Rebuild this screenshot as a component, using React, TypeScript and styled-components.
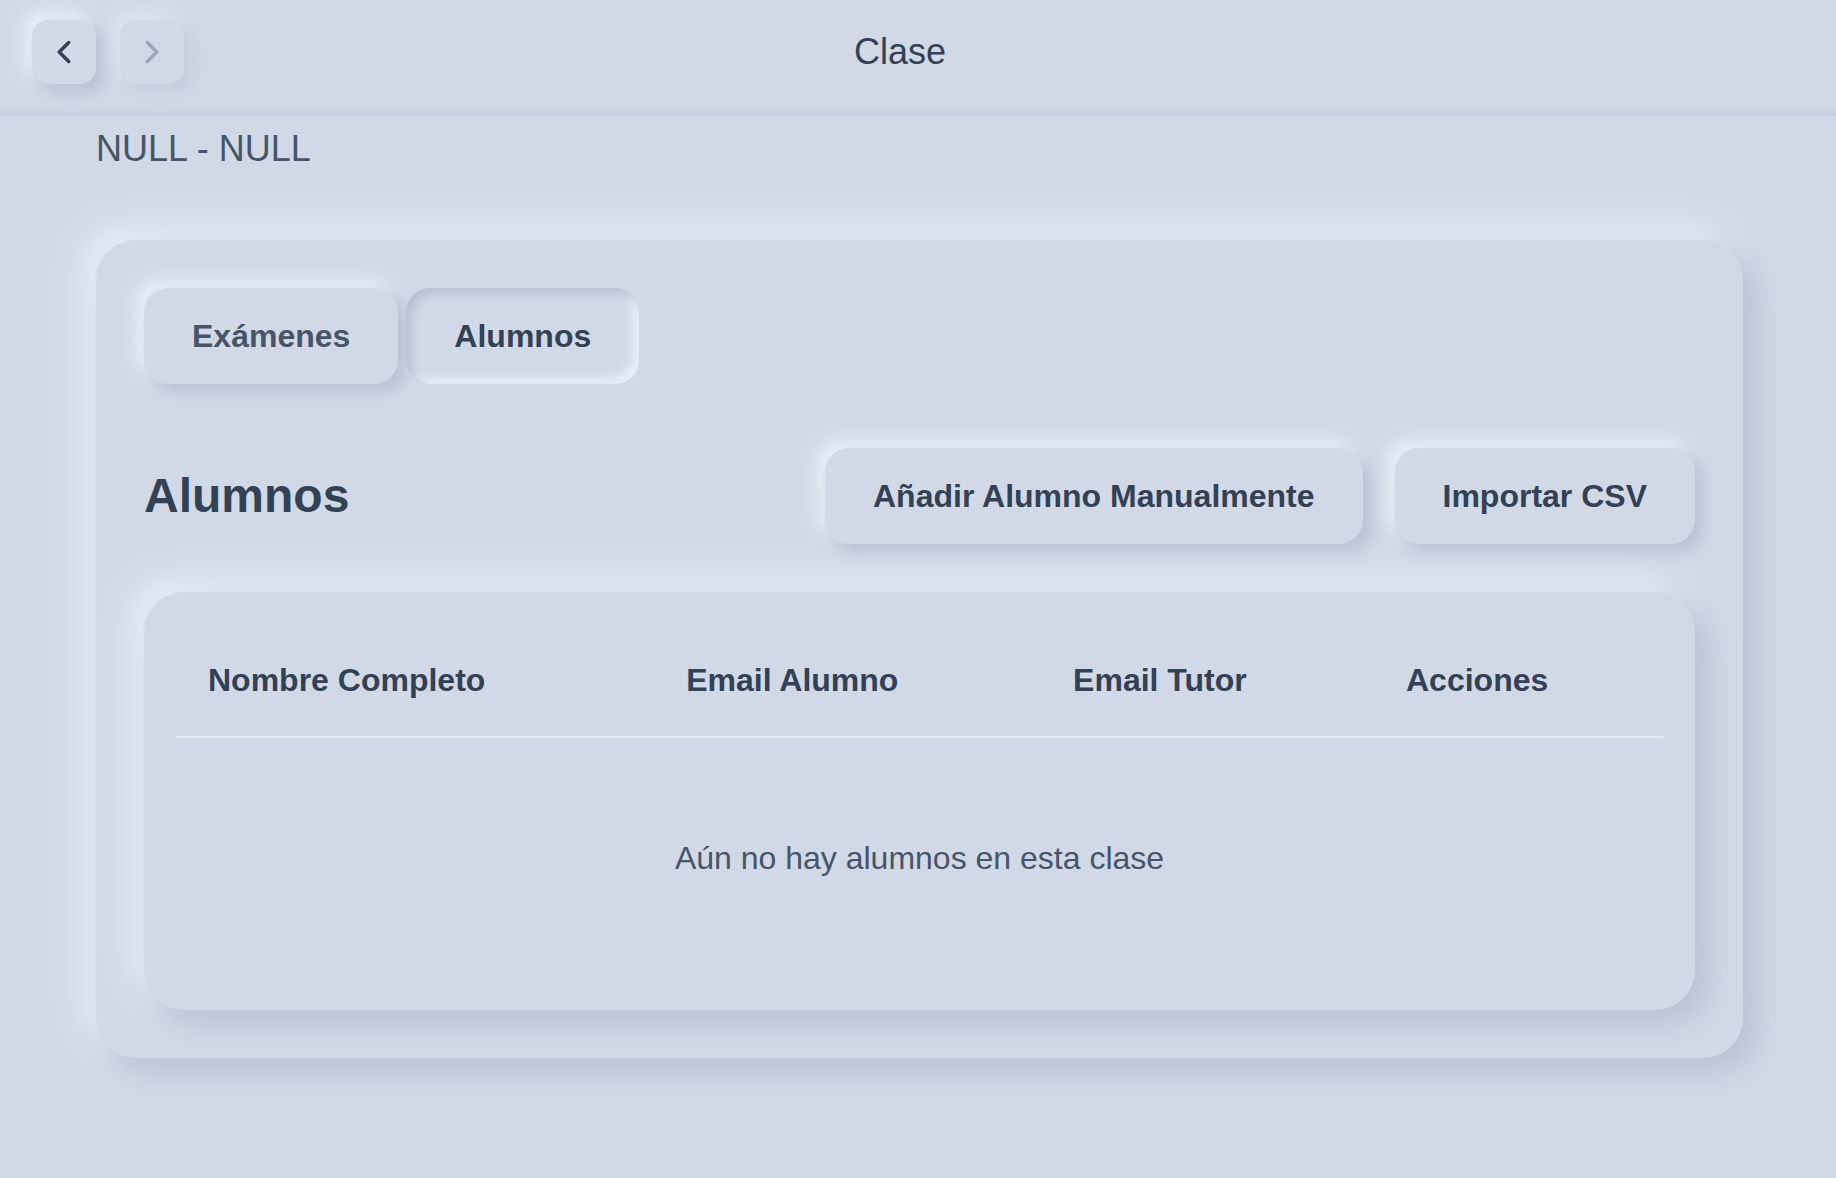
import styled, { createGlobalStyle } from 'styled-components'
import { ChevronLeft, ChevronRight } from 'lucide-react'

const GlobalStyle = createGlobalStyle`
  * {
    box-sizing: border-box;
  }
  html,
  body {
    margin: 0;
    padding: 0;
    background: #d1d9e6;
  }
  body {
    font-family: "Liberation Sans", Arial, sans-serif;
    color: #334155;
  }
`

const columns = ['Nombre Completo', 'Email Alumno', 'Email Tutor', 'Acciones']

export default function App() {
  return (
    <>
      <GlobalStyle />
      <Page>
        <TopBar>
          <NavGroup>
            <NavButton aria-label="Atrás">
              <ChevronLeft size={38} strokeWidth={2.2} />
            </NavButton>
            <NavButton aria-label="Adelante" disabled>
              <ChevronRight size={38} strokeWidth={2.2} />
            </NavButton>
          </NavGroup>
          <PageTitle>Clase</PageTitle>
          <span />
        </TopBar>

        <Content>
          <Subtitle>NULL - NULL</Subtitle>

          <Card>
            <Tabs>
              <Tab>Exámenes</Tab>
              <Tab $active>Alumnos</Tab>
            </Tabs>

            <SectionHeader>
              <SectionTitle>Alumnos</SectionTitle>
              <Actions>
                <ActionButton>Añadir Alumno Manualmente</ActionButton>
                <ActionButton>Importar CSV</ActionButton>
              </Actions>
            </SectionHeader>

            <TableCard>
              <Table>
                <thead>
                  <HeadRow>
                    {columns.map((c) => (
                      <Th key={c}>{c}</Th>
                    ))}
                  </HeadRow>
                </thead>
                <tbody>
                  <tr>
                    <EmptyCell colSpan={4}>Aún no hay alumnos en esta clase</EmptyCell>
                  </tr>
                </tbody>
              </Table>
            </TableCard>
          </Card>
        </Content>
      </Page>
    </>
  )
}

/**
 * style定義
 */
const raised = `
  box-shadow: 8px 8px 16px #b8c2d1, -8px -8px 16px #eaf0fa;
`
const raisedLarge = `
  box-shadow: 14px 14px 30px #b8c2d1, -14px -14px 30px #e6edf8;
`

const Page = styled.div`
  min-height: 100vh;
  background: #d1d9e6;
`

const TopBar = styled.header`
  display: grid;
  grid-template-columns: 1fr auto 1fr;
  align-items: center;
  height: 116px;
  padding: 20px 68px 32px 32px;
  box-shadow: inset 0 -8px 8px -6px rgba(170, 182, 200, 0.45);
`

const NavGroup = styled.div`
  display: flex;
  gap: 24px;
`

const NavButton = styled.button`
  display: flex;
  align-items: center;
  justify-content: center;
  width: 64px;
  height: 64px;
  padding: 0;
  border: none;
  border-radius: 16px;
  background: #d1d9e6;
  color: #334155;
  cursor: pointer;
  ${raised}

  &:disabled {
    opacity: 0.5;
    color: #64748b;
    cursor: default;
  }
`

const PageTitle = styled.h1`
  margin: 0;
  font-size: 36px;
  font-weight: 400;
  line-height: 40px;
  color: #334155;
`

const Content = styled.main`
  padding: 13px 93px 80px 96px;
`

const Subtitle = styled.h2`
  margin: 0 0 71px;
  font-size: 36px;
  font-weight: 400;
  line-height: 40px;
  color: #475569;
`

const Card = styled.section`
  padding: 48px;
  border-radius: 40px;
  background: #d1d9e6;
  ${raisedLarge}
`

const Tabs = styled.div`
  display: flex;
  gap: 8px;
  margin-bottom: 64px;
`

const Tab = styled.button<{ $active?: boolean }>`
  padding: 24px 48px;
  border: none;
  border-radius: 24px;
  background: #d1d9e6;
  font-family: inherit;
  font-size: 32px;
  font-weight: 700;
  line-height: 48px;
  color: ${({ $active }) => ($active ? '#334155' : '#475569')};
  cursor: pointer;
  box-shadow: ${({ $active }) =>
    $active
      ? 'inset 6px 6px 10px #b8c2d1, inset -6px -6px 10px #eaf0fa'
      : '8px 8px 16px #b8c2d1, -8px -8px 16px #eaf0fa'};
`

const SectionHeader = styled.div`
  display: flex;
  align-items: center;
  justify-content: space-between;
  margin-bottom: 48px;
`

const SectionTitle = styled.h3`
  margin: 0;
  font-size: 48px;
  font-weight: 700;
  line-height: 56px;
  color: #334155;
`

const Actions = styled.div`
  display: flex;
  gap: 32px;
`

const ActionButton = styled.button`
  padding: 24px 48px;
  border: none;
  border-radius: 24px;
  background: #d1d9e6;
  font-family: inherit;
  font-size: 32px;
  font-weight: 700;
  line-height: 48px;
  color: #334155;
  cursor: pointer;
  ${raised}
`

const TableCard = styled.div`
  padding: 32px;
  border-radius: 40px;
  background: #d1d9e6;
  ${raisedLarge}
`

const Table = styled.table`
  width: 100%;
  border-collapse: collapse;
`

const HeadRow = styled.tr`
  border-bottom: 2px solid #e2e8f0;
`

const Th = styled.th`
  padding: 32px;
  font-size: 32px;
  font-weight: 700;
  line-height: 48px;
  text-align: left;
  color: #334155;
`

const EmptyCell = styled.td`
  padding: 96px 32px;
  font-size: 32px;
  line-height: 48px;
  text-align: center;
  color: #475569;
`
